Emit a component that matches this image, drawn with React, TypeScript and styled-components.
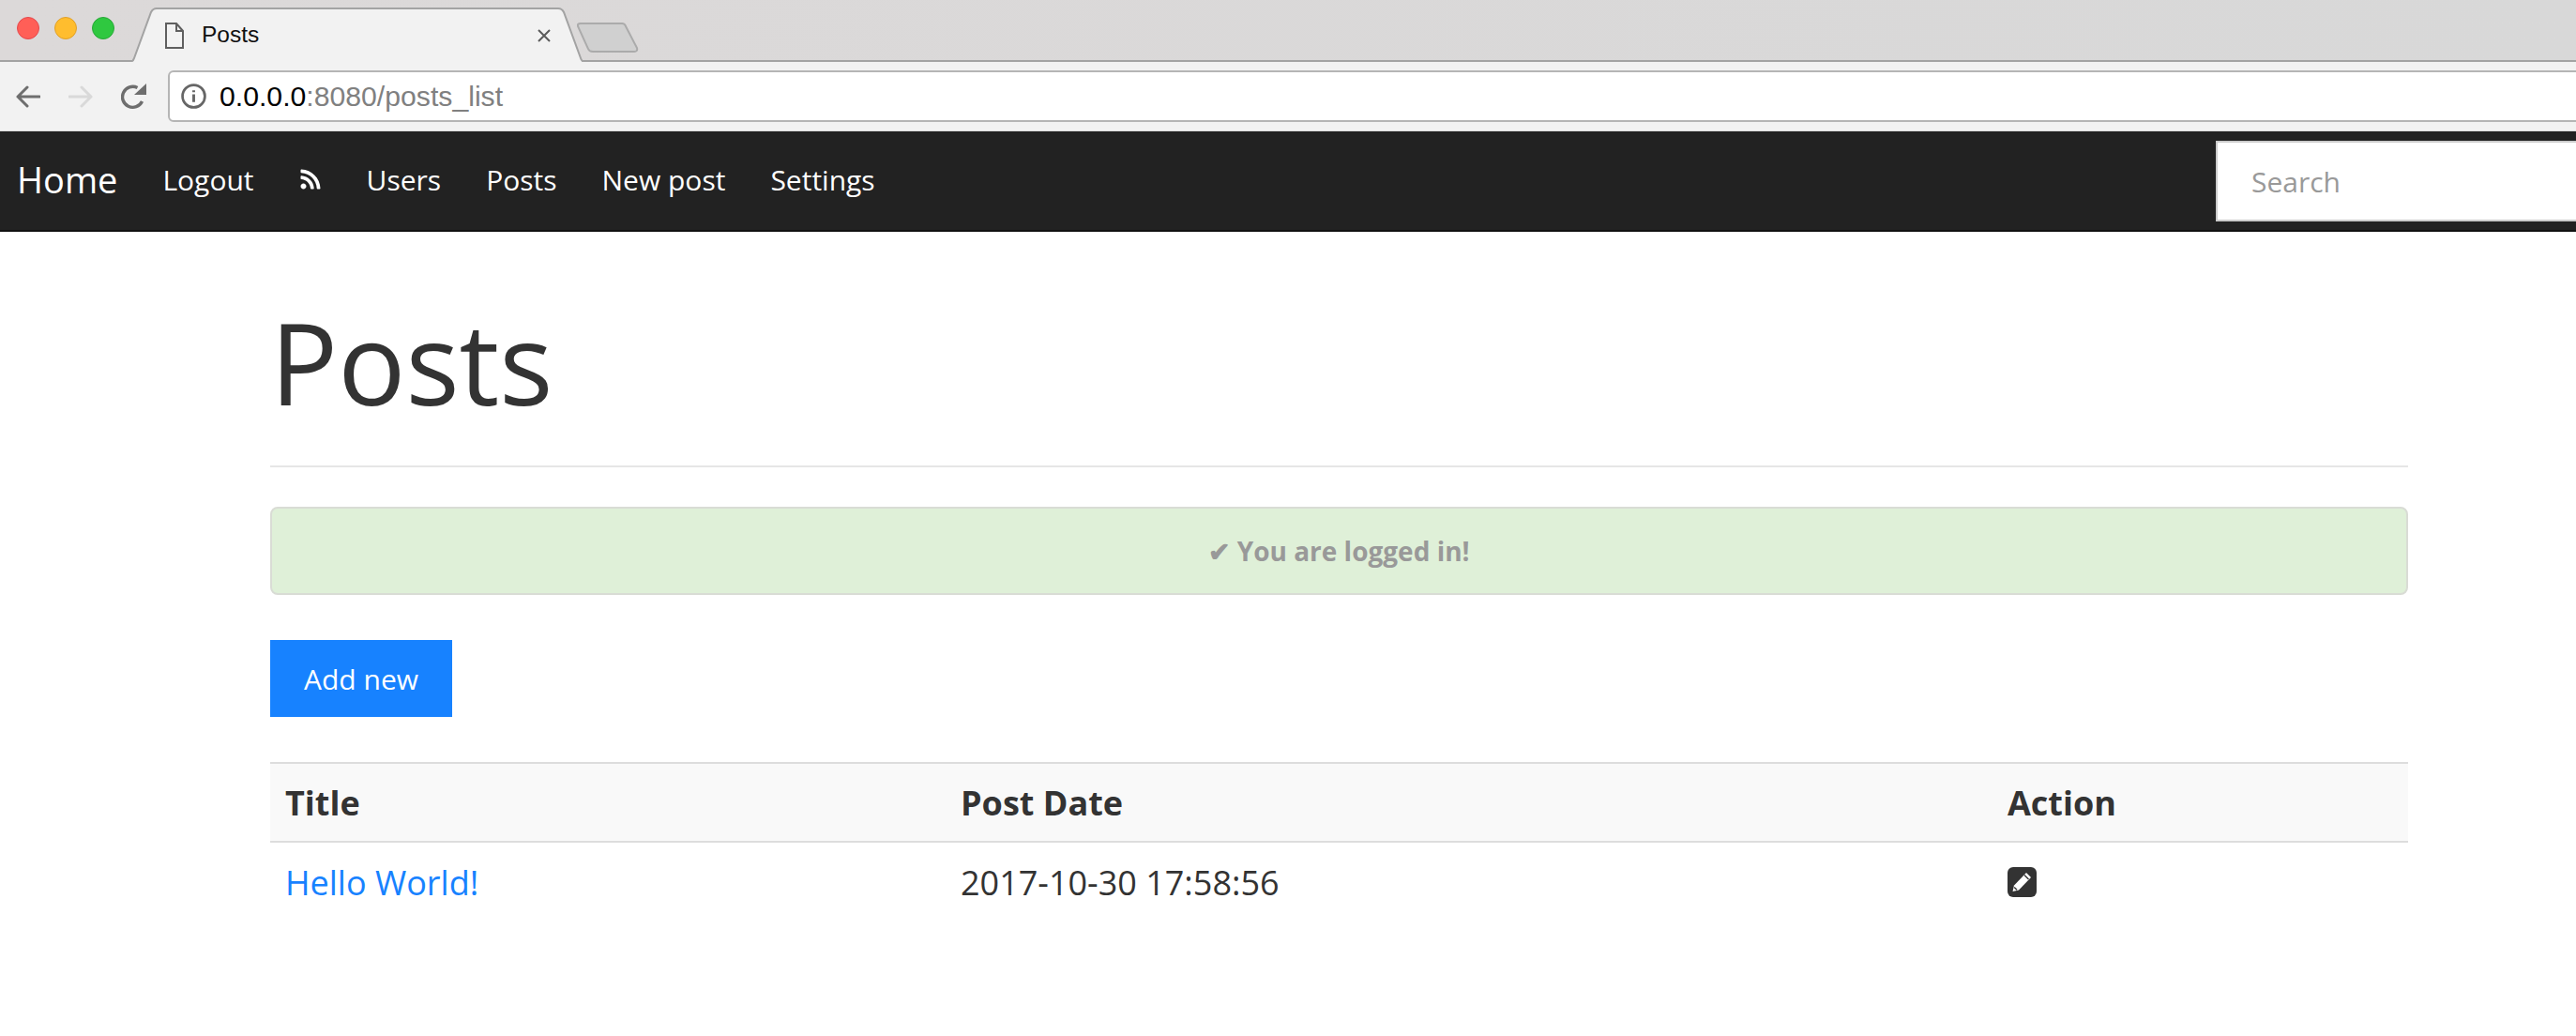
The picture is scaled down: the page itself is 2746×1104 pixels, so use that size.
import React from "react";
import styled, { createGlobalStyle } from "styled-components";
import { FaRss } from "react-icons/fa";

const Global = createGlobalStyle`
  html, body { margin: 0; padding: 0; background: #fff; overflow: hidden; }
  body { font-family: "Open Sans", "Liberation Sans", sans-serif; color: #333; }
`;
const Page = styled.div`width: 2746px; height: 1104px; overflow: hidden; background: #fff;`;
const TabStrip = styled.div`
  height: 64px; background: linear-gradient(90deg, #dcd9d9, #d8d8d8); border-bottom: 2px solid #a3a3a3;
  box-sizing: content-box; display: flex; align-items: flex-start; padding-left: 18px;
`;
const Lights = styled.div`display: flex; gap: 16px; padding-top: 18px; width: 121px;`;
const Light = styled.span<{ $c: string; $b: string }>`
  width: 24px; height: 24px; border-radius: 50%; background: ${p => p.$c}; box-sizing: border-box; border: 1px solid ${p => p.$b};
`;
const Tab = styled.div`
  position: relative; width: 482px; height: 58px; margin-top: 8px; display: flex; align-items: center; padding-left: 37px; box-sizing: border-box; z-index: 1;
  font: 24.5px "Liberation Sans", Arial, sans-serif; color: #111;
`;
const TabShape = styled.svg`position: absolute; left: 0; top: 0;`;
const TabFile = styled.svg`position: relative; margin-right: 19px; margin-top: 2px;`;
const TabLabel = styled.span`position: relative; flex: 1; margin-top: 0;`;
const TabClose = styled.svg`position: relative; margin-right: 34px; margin-top: 2px;`;
const NewTab = styled.svg`margin: 24px 0 0 -6px;`;
const Toolbar = styled.div`
  height: 74px; background: #f2f2f2; display: flex; align-items: center; padding-left: 17px; box-sizing: border-box; border-bottom: 1px solid #dcdcdc;
`;
const NavIcons = styled.div`display: flex; align-items: center; gap: 30px; width: 162px;`;
const Address = styled.div`
  height: 55px; flex: 1; margin-right: -20px; background: #fff; border: 2px solid #b5b5b5; border-radius: 6px; box-sizing: border-box; display: flex; align-items: center; padding-left: 12px; gap: 14px;
  font: 30.2px "Liberation Sans", Arial, sans-serif; color: #808080;
`;
const Host = styled.span`color: #000;`;
const Nav = styled.nav`
  height: 105px; background: #222; border-bottom: 2px solid #111; box-sizing: content-box; display: flex; align-items: center; padding-left: 18px; overflow: hidden;
`;
const Brand = styled.a`font-size: 38px; color: #fff; margin-right: 48px; margin-top: -4px;`;
const NavList = styled.div`display: flex; align-items: center; gap: 48px; margin-top: -3px;`;
const NavLink = styled.a`font-size: 30px; color: #fff; display: flex; align-items: center;`;
const SearchBox = styled.div`
  margin-left: auto; width: 430px; margin-right: -46px; height: 86px; margin-top: 1px; border: 2px solid #ccc; background: #fff; box-sizing: border-box; display: flex; align-items: center; padding-left: 36px;
  font-size: 30px; color: #999; flex-shrink: 0;
`;
const Content = styled.main`margin: 0 179px 0 288px;`;
const Title = styled.h1`
  margin: 67px 0 0; font-size: 120px; font-weight: 400; line-height: 1.2; color: #333; padding: 0 0 38px; border-bottom: 2px solid #e6e6e6;
`;
const Alert = styled.div`
  margin-top: 42px; height: 94px; background: #dff0d8; border: 2px solid #d9dcd5; border-radius: 8px; box-sizing: border-box; display: flex; align-items: center; justify-content: center;
  font-size: 28px; font-weight: 700; color: #999;
`;
const AddButton = styled.button`
  display: block; margin-top: 48px; width: 194px; height: 82px; padding: 0; border: 0; background: #1782ff; color: #fff; font: 30px "Open Sans", sans-serif;
`;
const Table = styled.div`margin-top: 48px;`;
const Row = styled.div`display: grid; grid-template-columns: 720px 1116px 1fr; padding-left: 16px;`;
const HeadRow = styled(Row)`
  height: 86px; align-items: center; background: #f9f9f9; border-top: 2px solid #ddd; border-bottom: 2px solid #ddd; box-sizing: border-box; font-size: 36px; font-weight: 700; color: #333;
`;
const BodyRow = styled(Row)`height: 84px; align-items: center; font-size: 36px; color: #333;`;
const PostLink = styled.a`color: #1782ff;`;
const ActionIcon = styled.a`display: flex;`;

export default function App() {
  return (
    <Page>
      <Global />
      <TabStrip>
        <Lights>
          <Light $c="#ff5f57" $b="#e5484d" />
          <Light $c="#ffbd2e" $b="#e0a028" />
          <Light $c="#2fc840" $b="#28a838" />
        </Lights>
        <Tab>
          <TabShape width="482" height="58" viewBox="0 0 482 58">
            <path d="M0 57.5 H0 Q3 57.5 4 54 L22 5 Q24 1 28 1 H456 Q460 1 462 5 L480 54 Q481 57.5 484 58 V60 H0 Z" fill="#f2f2f2" stroke="#a3a3a3" strokeWidth="2" />
          </TabShape>
          <TabFile width="20" height="28" viewBox="0 0 20 28" fill="none" stroke="#5f5f5f" strokeWidth="2">
            <path d="M1 1 H12 L19 9 V27 H1 Z M12 1 V9 H19" />
          </TabFile>
          <TabLabel>Posts</TabLabel>
          <TabClose width="14" height="14" viewBox="0 0 14 14" stroke="#5a5a5a" strokeWidth="2">
            <path d="M1 1 L13 13 M13 1 L1 13" />
          </TabClose>
        </Tab>
        <NewTab width="66" height="33" viewBox="0 0 66 33">
          <path d="M4 1 H48 Q51 1 52 4 L64 27 Q65 31 61 31 H17 Q13 31 12 28 L1 4 Q0 1 4 1 Z" fill="#d0d0d0" stroke="#ababab" strokeWidth="2" />
        </NewTab>
      </TabStrip>
      <Toolbar>
        <NavIcons>
          <svg width="26" height="24" viewBox="0 0 26 24" fill="none" stroke="#6e6e6e" strokeWidth="3" strokeLinecap="round" strokeLinejoin="round">
            <path d="M25 12 H2 M12 2 L2 12 L12 22" />
          </svg>
          <svg width="26" height="24" viewBox="0 0 26 24" fill="none" stroke="#d9d9d9" strokeWidth="3" strokeLinecap="round" strokeLinejoin="round">
            <path d="M1 12 H24 M14 2 L24 12 L14 22" />
          </svg>
          <svg width="28" height="28" viewBox="0 0 28 28" fill="none">
            <path d="M22.5 19 A11 11 0 1 1 17.5 4.5" stroke="#6e6e6e" strokeWidth="3.4" />
            <path d="M14 12 L27 12 L27 0 Z" fill="#6e6e6e" />
          </svg>
        </NavIcons>
        <Address>
          <svg width="27" height="27" viewBox="0 0 26 26" fill="none">
            <circle cx="13" cy="13" r="11.5" stroke="#666" strokeWidth="2.6" />
            <path d="M13 11 V19 M13 7 V9" stroke="#666" strokeWidth="2.8" />
          </svg>
          <span><Host>0.0.0.0</Host>:8080/posts_list</span>
        </Address>
      </Toolbar>
      <Nav>
        <Brand>Home</Brand>
        <NavList>
          <NavLink>Logout</NavLink>
          <NavLink><FaRss size={24} /></NavLink>
          <NavLink>Users</NavLink>
          <NavLink>Posts</NavLink>
          <NavLink>New post</NavLink>
          <NavLink>Settings</NavLink>
        </NavList>
        <SearchBox>Search</SearchBox>
      </Nav>
      <Content>
        <Title>Posts</Title>
        <Alert>✔ You are logged in!</Alert>
        <AddButton>Add new</AddButton>
        <Table>
          <HeadRow><span>Title</span><span>Post Date</span><span>Action</span></HeadRow>
          <BodyRow>
            <PostLink>Hello World!</PostLink>
            <span>2017-10-30 17:58:56</span>
            <ActionIcon>
              <svg width="31" height="32" viewBox="0 0 31 32">
                <rect x="0" y="0" width="31" height="32" rx="6" fill="#333" />
                <path d="M20 6 L25 11 L12 24.5 L5.5 26 L7 19.5 Z" fill="#fff" />
                <path d="M18 8.5 L22.5 13" stroke="#333" strokeWidth="1.4" />
                <path d="M7.2 21.5 L10 24.3" stroke="#333" strokeWidth="1.4" />
              </svg>
            </ActionIcon>
          </BodyRow>
        </Table>
      </Content>
    </Page>
  );
}
